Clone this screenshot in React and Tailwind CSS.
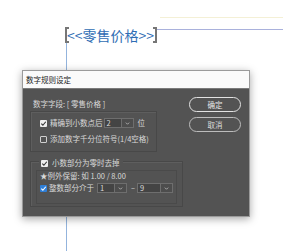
import React from "react";

const FONT = { fontFamily: '"Noto Sans CJK SC", "Noto Sans", sans-serif' };

const Check = ({ checked = false, blue = false }) => {
  if (blue) {
    return (
      <span className="flex h-[7px] w-[7px] shrink-0 items-center justify-center rounded-[1px] bg-[#2f7fd8]">
        <svg viewBox="0 0 8 8" className="h-[7px] w-[7px]">
          <path d="M1.5 4.2 L3.3 6 L6.6 2" fill="none" stroke="#fff" strokeWidth="1.3" />
        </svg>
      </span>
    );
  }
  if (checked) {
    return (
      <span className="flex h-[7px] w-[7px] shrink-0 items-center justify-center rounded-[1px] bg-[#eeeeee]">
        <svg viewBox="0 0 8 8" className="h-[7px] w-[7px]">
          <path d="M1.5 4.2 L3.3 6 L6.6 2" fill="none" stroke="#333" strokeWidth="1.3" />
        </svg>
      </span>
    );
  }
  return <span className="h-[7px] w-[7px] shrink-0 rounded-[1px] border border-[#cfcfcf]" />;
};

const Select = ({ value, w }) => (
  <div className="flex h-[10px]">
    <div
      className={`flex items-center border border-[#6e6e6e] bg-[#444444] pl-[2px] leading-none ${w}`}
    >
      {value}
    </div>
    <div className="flex w-[12px] items-center justify-center border border-l-0 border-[#6e6e6e] bg-[#4d4d4d]">
      <svg viewBox="0 0 6 4" className="h-[3px] w-[5px]">
        <path d="M0.8 0.8 L3 3 L5.2 0.8" fill="none" stroke="#c8c8c8" strokeWidth="1" />
      </svg>
    </div>
  </div>
);

export default function App() {
  return (
    <div className="relative h-[251px] w-[283px] overflow-hidden bg-white" style={FONT}>
      {/* document canvas */}
      <div className="absolute left-[160px] top-[17px] h-px w-[123px] bg-[#f4f0d6]" />
      <div className="absolute left-[157px] top-[29px] h-px w-[126px] bg-[#a9b1dc]" />
      <div className="absolute left-[66px] top-[43px] h-[208px] w-px bg-[#93b4dd]" />
      <div className="absolute left-[65px] top-[27px] h-[16px] w-[4px] border-y-2 border-l-2 border-[#767676]" />
      <div className="absolute left-[153px] top-[27px] h-[16px] w-[4px] border-y-2 border-r-2 border-[#767676]" />
      <div className="absolute left-[67px] top-[26px] text-[14px] leading-[18px] text-[#2f6db4] whitespace-nowrap">
        &lt;&lt;零售价格&gt;&gt;
      </div>

      {/* dialog */}
      <div className="absolute left-[22px] top-[70px] flex h-[147px] w-[228px] flex-col border border-[#9a9a9a] shadow-[0_2px_8px_rgba(0,0,0,0.35)]">
        <div className="flex h-[18px] items-center border-b border-[#7a7a7a] bg-[#fafafa] pl-[3px] text-[7.5px] text-[#222]">
          数字规则设定
        </div>
        <div className="flex flex-1 gap-[6px] bg-[#535353] pl-[7px] pt-[9px] text-[7.5px] text-[#d9d9d9]">
          <div className="flex w-[153px] flex-col">
            <div className="h-[12px] pl-[3px] leading-[12px] whitespace-nowrap">数字字段: [ 零售价格 ]</div>

            <div className="mt-[1px] flex h-[41px] w-[127px] flex-col border border-[#484848] pl-[9px] pt-[6px] shadow-[inset_1px_1px_0_#5e5e5e]">
              <div className="flex h-[10px] items-center">
                <Check checked />
                <span className="ml-[3px] whitespace-nowrap">精确到小数点后</span>
                <div className="ml-[1px]">
                  <Select value="2" w="w-[18px]" />
                </div>
                <span className="ml-[4px]">位</span>
              </div>
              <div className="mt-[5px] flex h-[12px] items-center">
                <Check />
                <span className="ml-[3px] whitespace-nowrap">添加数字千分位符号(1/4空格)</span>
              </div>
            </div>

            <div className="mt-[9px] flex h-[46px] w-[153px] flex-col border border-[#484848] shadow-[inset_1px_1px_0_#5e5e5e]">
              <div className="-mt-[5px] ml-[8px] flex h-[12px] w-fit items-center bg-[#535353] pr-[3px]">
                <span className="ml-[2px]"><Check checked /></span>
                <span className="ml-[4px] whitespace-nowrap">小数部分为零时去掉</span>
              </div>
              <div className="mx-[5px] mt-[1px] flex h-[34px] flex-col border border-[#4a4a4a] pl-[3px]">
                <div className="-mt-[1px] h-[12px] leading-[12px] whitespace-nowrap">★例外保留: 如 1.00 / 8.00</div>
                <div className="mt-[1px] flex h-[10px] items-center">
                  <Check blue />
                  <span className="ml-[2px] whitespace-nowrap">整数部分介于</span>
                  <div className="ml-[3px]">
                    <Select value="1" w="w-[18px]" />
                  </div>
                  <span className="ml-[4px]">–</span>
                  <div className="ml-[2px]">
                    <Select value="9" w="w-[24px]" />
                  </div>
                </div>
              </div>
            </div>
          </div>

          <div className="flex flex-col gap-[5px] pt-[-1px]">
            <div className="-mt-px flex h-[15px] w-[52px] items-center justify-center rounded-full border-[1.5px] border-[#e2e2e2] text-[#e6e6e6]">
              确定
            </div>
            <div className="flex h-[15px] w-[52px] items-center justify-center rounded-full border border-[#bcbcbc] text-[#dcdcdc]">
              取消
            </div>
          </div>
        </div>
      </div>
    </div>
  );
}
